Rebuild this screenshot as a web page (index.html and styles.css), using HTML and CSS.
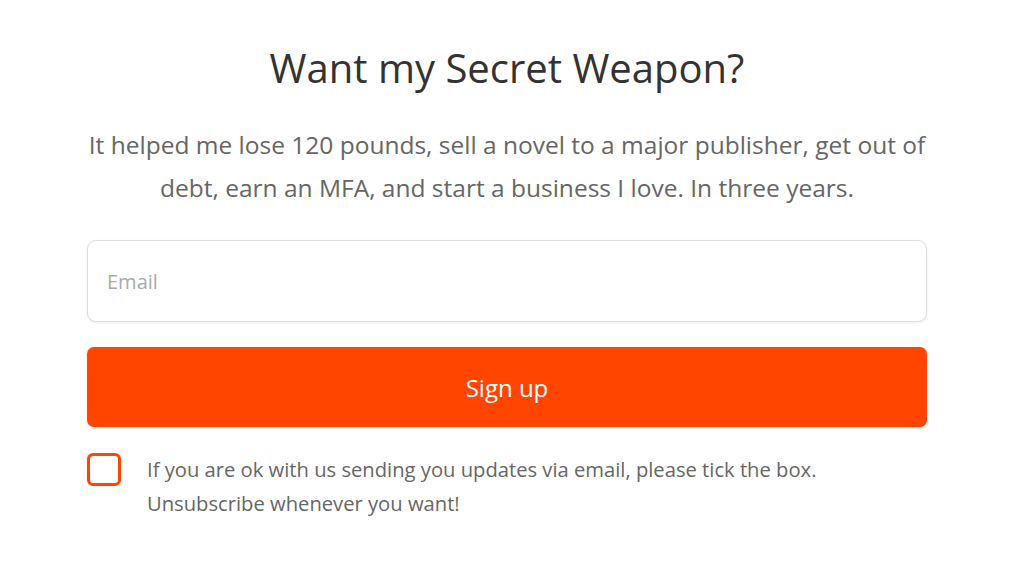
FILE: index.html
```html
<!DOCTYPE html>
<html lang="en">
<head>
    <meta charset="UTF-8">
    <meta name="viewport" content="width=device-width, initial-scale=1.0">
    <title>Want my Secret Weapon?</title>
    <link rel="stylesheet" href="styles.css">
</head>
<body>

    <div id="wrapper">
        <h1>Want my Secret Weapon?</h1>

        <p class="intro">It helped me lose 120 pounds, sell a novel to a major publisher, get out of debt, earn an MFA, and start a business I love. In three years.</p>

        <!-- Signup form -->
        <form class="signup-form" onsubmit="return false;">
            <input type="email" id="email" placeholder="Email">
            <button type="submit">Sign up</button>

            <label class="consent">
                <input type="checkbox" id="consent-box">
                <span class="box"></span>
                <span class="consent-text">If you are ok with us sending you updates via email, please tick the box. Unsubscribe whenever you want!</span>
            </label>
        </form>
    </div>

</body>
</html>
```

FILE: styles.css
```css
* {
    box-sizing: border-box;
    margin: 0;
    padding: 0;
}

body {
    font-family: "Open Sans", Arial, sans-serif;
    background: #fff;
    color: #333;
    padding-right: 10px;
}

#wrapper {
    max-width: 840px;
    margin: 0 auto;
    padding-top: 40px;
    text-align: center;
}

h1 {
    font-size: 40px;
    font-weight: 400;
    color: #333;
    line-height: 56px;
    margin-bottom: 27px;
}

.intro {
    font-size: 24.5px;
    line-height: 43px;
    color: #666;
    margin-bottom: 31px;
}

/* Form */
.signup-form {
    display: flex;
    flex-direction: column;
    gap: 25px;
}

input[type="email"] {
    width: 100%;
    height: 82px;
    padding: 0 19px;
    font-family: inherit;
    font-size: 20px;
    color: #333;
    border: 1px solid #ddd;
    border-radius: 9px;
    box-shadow: 0 1px 3px rgba(0, 0, 0, 0.08);
    outline: none;
}

input[type="email"]::placeholder {
    color: #aaa;
}

button {
    width: 100%;
    height: 80px;
    background-color: #ff4500;
    border: none;
    border-radius: 7px;
    color: #fff;
    font-family: inherit;
    font-size: 24px;
    cursor: pointer;
    box-shadow: 0 1px 3px rgba(0, 0, 0, 0.1);
}

/* Consent checkbox */
.consent {
    display: flex;
    align-items: flex-start;
    gap: 26px;
    text-align: left;
    cursor: pointer;
}

.consent input {
    display: none;
}

.box {
    flex: none;
    width: 34px;
    height: 33px;
    margin-top: 1px;
    border: 3px solid #ff4500;
    border-radius: 6px;
}

.consent-text {
    font-size: 20.2px;
    line-height: 34px;
    color: #666;
    padding-right: 20px;
}
```
